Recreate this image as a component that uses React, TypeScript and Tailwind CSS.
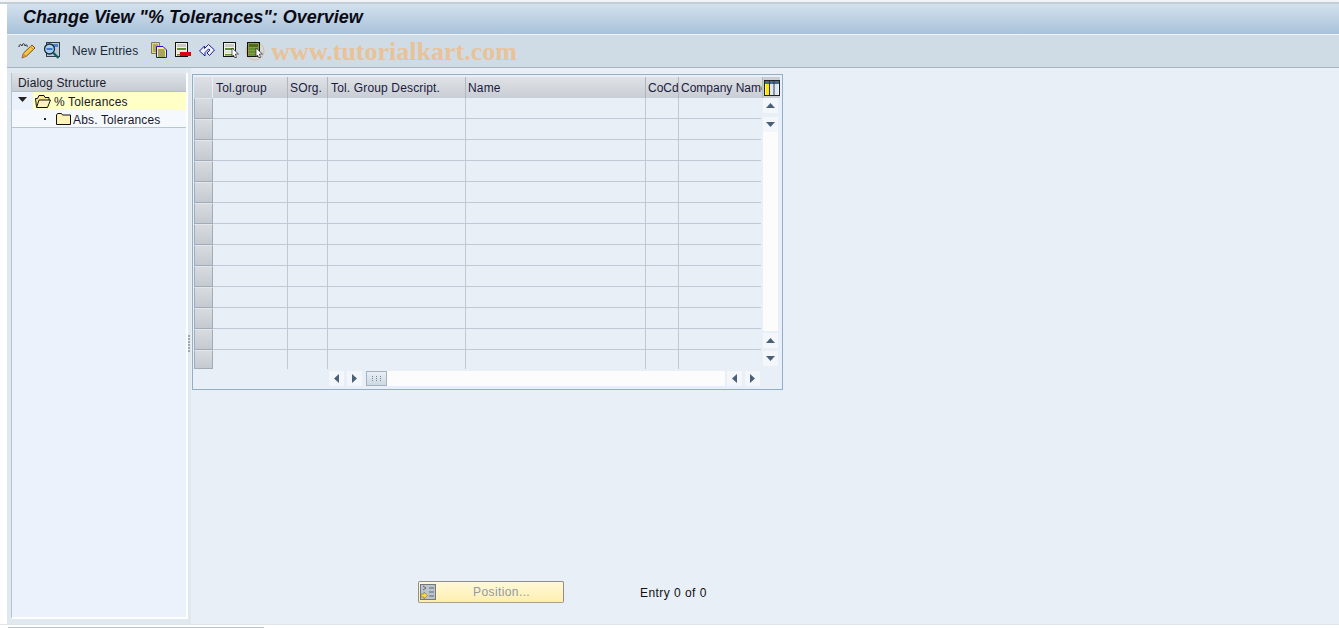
const cols = [75, 40, 138, 180, 33, 84];
const heads = ["Tol.group", "SOrg.", "Tol. Group Descript.", "Name", "CoCd", "Company Name"];
const pads = ["pl-[3px]", "pl-[2px]", "pl-[3px]", "pl-[2px]", "pl-[2px] tracking-normal", "pl-[2px] tracking-normal"];
const rows = Array.from({ length: 13 }, (_, i) => i);
const UI = { fontFamily: '"Liberation Sans", Arial, sans-serif' };

function Pencil() {
  return (
    <svg width="18" height="17" viewBox="0 0 18 17">
      <path d="M1 5 C1 2 3 2 4 4 C4 1 7 1 7 4 C8 2 10 3 9 5" fill="none" stroke="#222" strokeWidth="1" />
      <path d="M4 16 L5.5 11 L14 3 L17 6 L8.5 14 Z" fill="#f8c63c" stroke="#4a3210" strokeWidth="0.8" />
      <path d="M4 16 L5.5 11 L8.5 14 Z" fill="#ef8a3a" />
      <path d="M12.5 4.5 L15.5 7.5" stroke="#d8882a" strokeWidth="1" />
    </svg>
  );
}
function Glasses() {
  return (
    <svg width="17" height="17" viewBox="0 0 17 17">
      <rect x="3.5" y="0.5" width="13" height="14" fill="#b9c8d6" stroke="#2f3d4a" strokeWidth="1" />
      <rect x="5" y="2" width="10" height="3" fill="#4f82cc" />
      <circle cx="6.5" cy="7" r="5" fill="#a7d0f2" stroke="#1d2a38" strokeWidth="1.3" />
      <path d="M3.5 6 H9.5 V8 H3.5 Z" fill="#3c78cc" />
      <path d="M10 10.5 L15.5 16" stroke="#0f5c5c" strokeWidth="2.2" />
    </svg>
  );
}
function Copy() {
  return (
    <svg width="16" height="16" viewBox="0 0 16 16">
      <path d="M0.5 0.5 H8.5 V11.5 H0.5 Z" fill="#e9d76a" stroke="#7a7a6a" />
      <path d="M2 3 H7 M2 5 H7 M2 7 H7 M2 9 H5" stroke="#777" />
      <path d="M5.5 4.5 H12 L15.5 8 V15.5 H5.5 Z" fill="#fff36a" stroke="#1414d0" />
      <path d="M7 8 H13.5 M7 10 H14 M7 12 H14 M7 14 H14" stroke="#555" />
    </svg>
  );
}
function Sheet({ dark }: { dark?: boolean }) {
  return (
    <>
      <rect x="0.5" y="0.5" width="12" height="14" fill={dark ? "#8a9a4a" : "#f1f1e6"} stroke="#111" />
      <rect x="2" y="2" width="9" height="3" fill={dark ? "#4f6a1a" : "#c9c9c9"} />
      <rect x="2" y="6" width="9" height="2" fill="#5f8f2e" />
      <rect x="2" y="9" width="9" height="2" fill={dark ? "#5f8f2e" : "#dfe5cf"} />
      <rect x="2" y="12" width="9" height="1.5" fill="#5f8f2e" />
    </>
  );
}
function Delete() {
  return (
    <svg width="16" height="16" viewBox="0 0 16 16">
      <Sheet />
      <rect x="5" y="10" width="11" height="4" fill="#d8001a" />
    </svg>
  );
}
function Undo() {
  return (
    <svg width="16" height="16" viewBox="0 0 16 16">
      <path d="M0.5 9 L5.5 4 V6.5 L9.5 2.5 L15.5 8 L10.5 13.5 L8 11 L11 8 L9.5 7 L6 10.5 V14 Z" fill="#eef2fb" stroke="#1a1a9a" strokeWidth="1" strokeLinejoin="round" />
    </svg>
  );
}
function SheetArrow({ dark }: { dark?: boolean }) {
  return (
    <svg width="16" height="17" viewBox="0 0 16 17" className="overflow-visible">
      {dark && <circle cx="8" cy="9" r="9" fill="none" stroke="#e2b890" strokeWidth="1" />}
      <Sheet dark={dark} />
      <path d="M9 6 L15.5 12 L12.5 12 L13.5 15.5 L11.5 15.5 L10.5 13 L9 14.5 Z" fill="#fff" stroke="#222" strokeWidth="0.7" />
    </svg>
  );
}
function FolderOpen() {
  return (
    <svg width="16" height="13" viewBox="0 0 16 13">
      <path d="M1.5 12 L0.5 3.5 H2.5 L4 0.5 H9 L10 2.5 H14 V5" fill="#fde992" stroke="#111" />
      <path d="M1.5 12.5 H12.5 L15.5 5 H4 Z" fill="#fff3b8" stroke="#111" />
    </svg>
  );
}
function FolderClosed() {
  return (
    <svg width="15" height="12" viewBox="0 0 15 12">
      <path d="M0.5 11.5 V2 L1.5 0.5 H5.5 L6.5 2 H14.5 V11.5 Z" fill="#fff3b8" stroke="#111" />
    </svg>
  );
}
function ColIcon() {
  return (
    <svg width="16" height="16" viewBox="0 0 16 16">
      <rect x="0.5" y="0.5" width="15" height="15" fill="#fff" stroke="#222" />
      <rect x="1" y="1" width="14" height="3" fill="#4a6a8a" />
      <rect x="1.5" y="4" width="3.5" height="11" fill="#ffe600" />
      <rect x="6" y="4" width="3.5" height="11" fill="#dbe8f5" />
      <rect x="10.5" y="4" width="4" height="11" fill="#dbe8f5" />
      <path d="M5.5 1 V15 M10 1 V15" stroke="#334" />
    </svg>
  );
}
function PosIcon() {
  return (
    <svg width="16" height="16" viewBox="0 0 16 16">
      <rect x="0.5" y="0.5" width="15" height="15" fill="#b9c4cf" stroke="#777" />
      <path d="M9 4 H14 M9 8 H14 M9 12 H14 M3 2 L6 4 L3 6" fill="none" stroke="#666" />
      <path d="M1 10 H4 V8 L7.5 11.5 L4 15 V13 H1 Z" fill="#f9d64a" stroke="#8a7a20" strokeWidth="0.6" />
    </svg>
  );
}
function Tri({ dir }: { dir: "up" | "down" | "left" | "right" }) {
  const d = { up: "M0 5 L4.5 0 L9 5 Z", down: "M0 0 H9 L4.5 5 Z", left: "M5 0 V9 L0 4.5 Z", right: "M0 0 V9 L5 4.5 Z" }[dir];
  const s = dir === "up" || dir === "down" ? [9, 5] : [5, 9];
  return (
    <svg width={s[0]} height={s[1]} viewBox={`0 0 ${s[0]} ${s[1]}`}>
      <path d={d} fill="#4a6076" />
    </svg>
  );
}
function ScrollBtn({ dir }: { dir: "up" | "down" | "left" | "right" }) {
  return (
    <div className="w-[15px] h-[15px] bg-[#f3f6fa] flex items-center justify-center shrink-0">
      <Tri dir={dir} />
    </div>
  );
}

export default function App() {
  return (
    <div className="w-[1339px] h-[628px] overflow-hidden bg-white text-[12px] text-[#1a1a2a] tracking-[0.15px]" style={UI}>
      <div className="h-[2px] bg-[#f2f4f7]" />
      <div className="h-[2px] bg-[#c5cdd6]" />
      <div className="pl-[7px] h-[620px] flex flex-col">
        <div className="h-[30px] shrink-0 bg-gradient-to-b from-[#d3e1ed] to-[#a9c2da] pl-[16px] pb-[3px] flex items-center text-[18px] font-bold italic text-[#0a0a14] tracking-normal">
          Change View "% Tolerances": Overview
        </div>
        <div className="h-[1px] shrink-0 bg-[#eef3f8]" />
        <div className="h-[32px] shrink-0 bg-[#cfdce6] flex items-center pl-[11px] pb-[2px]">
          <Pencil />
          <div className="w-[7px]" />
          <Glasses />
          <span className="ml-[12px] mr-[13px] mt-[2px] text-[#1b2a3a]">New Entries</span>
          <div className="flex items-center gap-[8px]">
            <Copy />
            <Delete />
            <Undo />
            <SheetArrow />
            <SheetArrow dark />
          </div>
          <span className="ml-[8px] mt-[3px] text-[26px] leading-none font-bold text-[#e9c298] tracking-normal" style={{ fontFamily: '"Liberation Serif", serif' }}>
            www.tutorialkart.com
          </span>
        </div>
        <div className="h-[1px] shrink-0 bg-[#a7b3bf]" />
        <div className="flex-1 bg-[#e8eff6] flex min-h-0">
          <div className="w-[184px] shrink-0 bg-[#e1e9f0] pl-[4px] pr-[3px] pt-[5px] pb-[5px] flex relative">
            <div className="flex-1 bg-[#ebf2fb] border-l border-[#b6c3d0] border-r-2 border-r-white border-b-2 border-b-white flex flex-col">
              <div className="h-[19px] bg-gradient-to-b from-[#dfe3e8] to-[#c6ccd3] pl-[6px] pt-[1px] flex items-center border-b border-[#b5bdc6]">Dialog Structure</div>
              <div className="h-[18px] flex items-center">
                <div className="w-[21px] flex justify-center pb-[3px]">
                  <svg width="9" height="5" viewBox="0 0 9 5"><path d="M0 0 H9 L4.5 5 Z" fill="#222" /></svg>
                </div>
                <div className="flex-1 h-full bg-[#ffffc8] flex items-center pl-[2px]">
                  <FolderOpen />
                  <span className="ml-[3px] mt-[2px]">% Tolerances</span>
                </div>
              </div>
              <div className="h-[18px] bg-[#f5f9fd] border-b border-[#b8c5d2] flex items-center">
                <div className="w-[44px] flex justify-end pr-[10px]">
                  <div className="w-[2px] h-[2px] bg-[#222]" />
                </div>
                <FolderClosed />
                <span className="ml-[2px] mt-[2px]">Abs. Tolerances</span>
              </div>
            </div>
            <div className="absolute right-[1px] top-[267px] flex flex-col gap-[1px]">
              {[0, 1, 2, 3, 4, 5].map((i) => <div key={i} className="w-[2px] h-[2px] bg-[#9aa8b6]" />)}
            </div>
          </div>
          <div className="ml-[1px] w-[591px] h-[316px] mt-[6px] border border-[#92aec8] pl-[1px] pr-[2px] pt-[2px] flex flex-col shrink-0">
            <div className="flex h-[21px] shrink-0">
              <div className="w-[19px] shrink-0 bg-gradient-to-b from-[#dde0e5] to-[#cdd2d8] border-r border-[#e8eff6]" />
              {cols.map((w, i) => (
                <div key={i} className={`shrink-0 h-full bg-gradient-to-b from-[#dfe2e6] to-[#c9ced4] border-r border-[#aeb7c2] flex items-center overflow-hidden whitespace-nowrap text-[#1a1a40] ${pads[i]}`} style={{ width: w }}>
                  {heads[i]}
                </div>
              ))}
              <div className="flex-1 bg-[#c9ced4] flex items-center justify-center"><ColIcon /></div>
            </div>
            <div className="flex flex-1 min-h-0">
              <div className="flex-1 flex flex-col">
                <div className="h-[271px] shrink-0 flex flex-col">
                  {rows.map((r) => (
                    <div key={r} className={`flex shrink-0 ${r < 12 ? "h-[21px]" : "h-[19px]"}`}>
                      <div className="w-[19px] shrink-0 bg-gradient-to-b from-[#d8dce1] to-[#c5cad0] border border-[#a2acb7] border-t-[#e3e7ec]" />
                      {cols.map((w, i) => (
                        <div key={i} className={`shrink-0 ${i < 5 ? "border-r border-[#c0cad6]" : ""} ${r < 12 ? "border-b border-[#c0cad6]" : ""}`} style={{ width: i === 5 ? w - 2 : w }} />
                      ))}
                    </div>
                  ))}
                </div>
                <div className="h-[20px] shrink-0 flex items-center pl-[135px] pb-[1px]">
                  <ScrollBtn dir="left" />
                  <div className="w-[3px]" />
                  <ScrollBtn dir="right" />
                  <div className="w-[4px]" />
                  <div className="w-[21px] h-[15px] bg-gradient-to-b from-[#e9eff5] to-[#cdd8e2] border border-[#a6b2be] flex items-center justify-center">
                    <svg width="9" height="5" viewBox="0 0 9 5"><path d="M0 0 H1 V1 H0 Z M4 0 H5 V1 H4 Z M8 0 H9 V1 H8 Z M0 2 H1 V3 H0 Z M4 2 H5 V3 H4 Z M8 2 H9 V3 H8 Z M0 4 H1 V5 H0 Z M4 4 H5 V5 H4 Z M8 4 H9 V5 H8 Z" fill="#75869a" /></svg>
                  </div>
                  <div className="w-[338px] h-[15px] bg-[#fcfcfd]" />
                  <div className="w-[2px]" />
                  <ScrollBtn dir="left" />
                  <div className="w-[3px]" />
                  <ScrollBtn dir="right" />
                </div>
              </div>
              <div className="w-[19px] shrink-0 pl-[2px] flex flex-col">
                <ScrollBtn dir="up" />
                <div className="h-[4px]" />
                <ScrollBtn dir="down" />
                <div className="w-[15px] h-[199px] bg-[#fcfcfd]" />
                <div className="h-[2px]" />
                <ScrollBtn dir="up" />
                <div className="h-[3px]" />
                <ScrollBtn dir="down" />
              </div>
            </div>
          </div>
          <div className="w-0 relative">
            <div className="absolute left-[-365px] top-[513px] flex items-center">
              <div className="w-[146px] h-[22px] rounded-[2px] border border-[#8e8e8e] border-b-[#a8a08a] bg-gradient-to-b from-[#fff9d8] to-[#feeeb0] flex items-center pl-[1px] text-[#8e9aa6] tracking-[0.4px]">
                <PosIcon />
                <span className="ml-[37px]">Position...</span>
              </div>
              <span className="ml-[76px] mt-[1px] whitespace-nowrap text-[#111] tracking-[0.45px]">Entry 0 of 0</span>
            </div>
          </div>
        </div>
      </div>
      <div className="h-[1px] bg-[#dfe5ea]" />
      <div className="h-[2px]" />
      <div className="ml-[8px] w-[256px] h-[1px] bg-[#b9c3cc]" />
    </div>
  );
}
